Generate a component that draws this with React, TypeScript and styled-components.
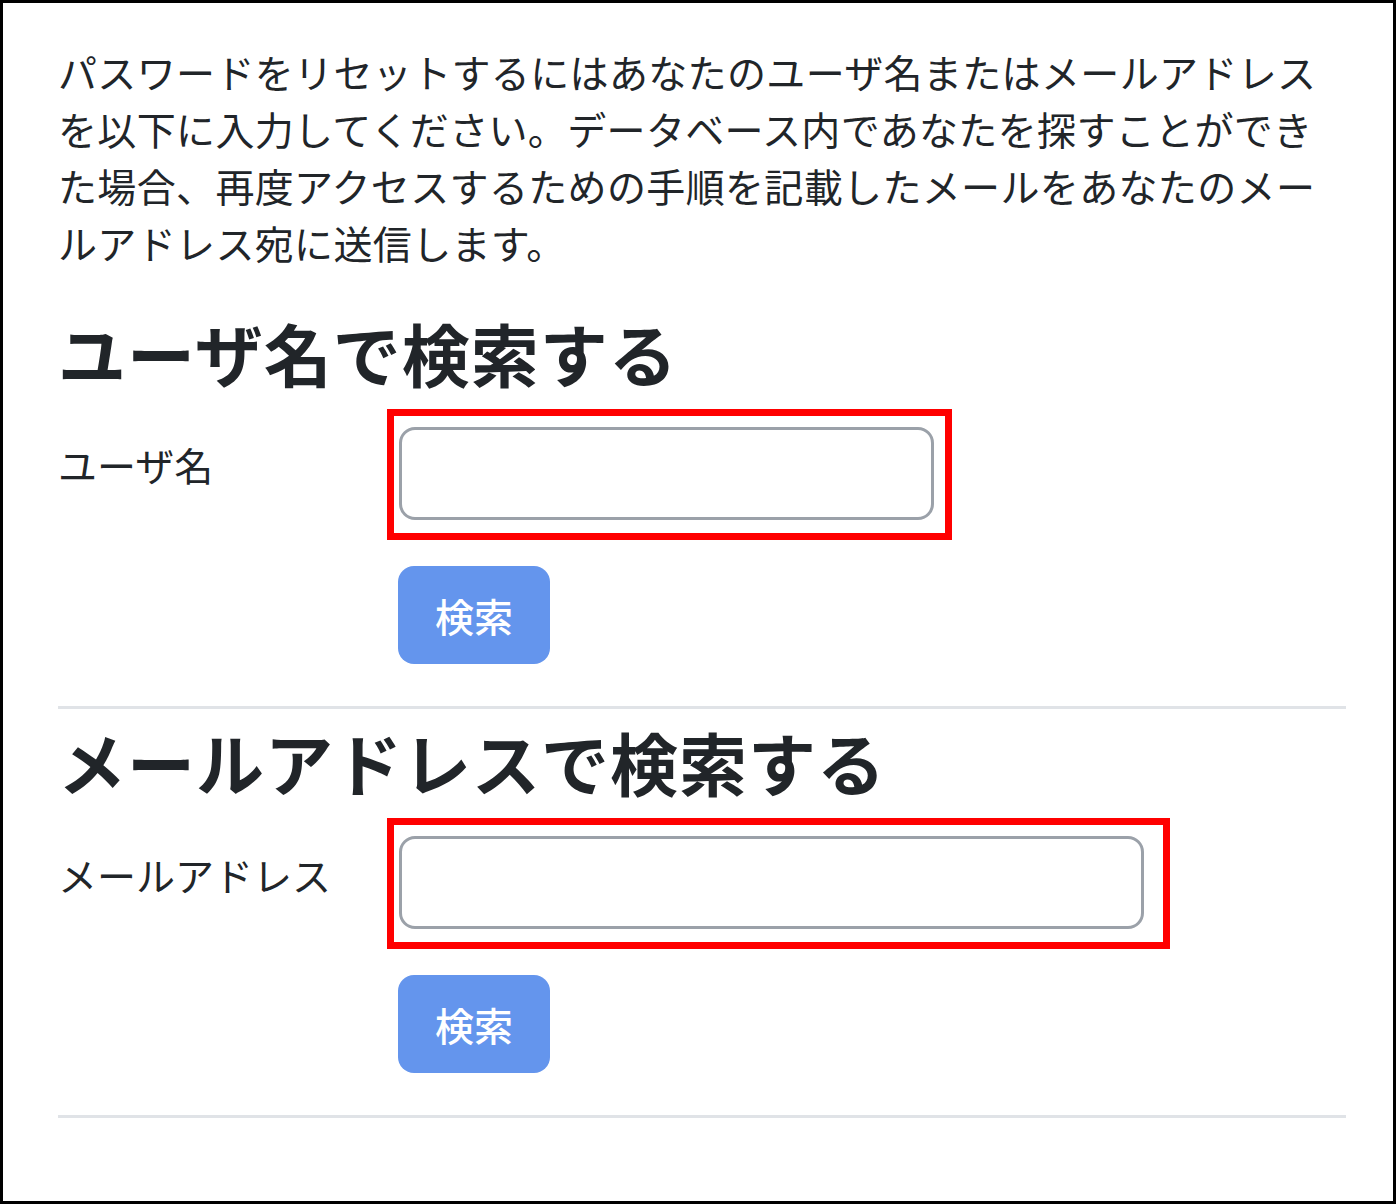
import React from 'react';
import styled, { createGlobalStyle } from 'styled-components';

const GlobalStyle = createGlobalStyle`
  html, body {
    margin: 0;
    padding: 0;
    background: #ffffff;
  }
  body {
    font-family: "Noto Sans CJK JP", "Noto Sans", sans-serif;
    color: #212529;
  }
`;

const Frame = styled.div`
  box-sizing: border-box;
  width: 1396px;
  height: 1204px;
  border: 3px solid #000;
  padding: 40px 47px 0 55px;
  background: #fff;
`;

const Intro = styled.p`
  margin: 0;
  font-size: 39px;
  line-height: 57px;
  color: #212529;
  letter-spacing: 0.35px;
`;

const Heading = styled.h3<{ gap: number }>`
  margin: ${p => p.gap}px 0 15px;
  font-size: 68px;
  line-height: 82px;
  font-weight: 700;
  letter-spacing: 1px;
  color: #212529;
`;

const FormRow = styled.div`
  display: flex;
  align-items: flex-start;
`;

const Label = styled.label<{ offset: number }>`
  width: 329px;
  flex-shrink: 0;
  margin-top: ${p => p.offset}px;
  font-size: 39px;
  line-height: 57px;
  color: #212529;
`;

const Highlight = styled.div<{ padRight: number }>`
  border: 7px solid #ff0000;
  padding: 11px ${p => p.padRight}px 13px 5px;
`;

const TextInput = styled.input<{ w: number }>`
  box-sizing: border-box;
  display: block;
  width: ${p => p.w}px;
  height: 93px;
  border: 3px solid #9ba1a9;
  border-radius: 16px;
  background: #fff;
  outline: none;
  font-size: 39px;
  padding: 0 18px;
`;

const ButtonRow = styled.div`
  padding-left: 340px;
  margin-top: 26px;
`;

const SearchButton = styled.button`
  box-sizing: border-box;
  width: 152px;
  height: 98px;
  border: none;
  border-radius: 16px;
  background: #6495ed;
  color: #fff;
  font-family: "Noto Sans CJK JP", sans-serif;
  font-size: 39px;
  font-weight: 500;
  cursor: pointer;
`;

const Divider = styled.hr`
  margin: 42px 0 0;
  border: none;
  height: 3px;
  background: #e0e3e7;
`;

type Section = {
  title: string;
  label: string;
  inputWidth: number;
  padRight: number;
  gap: number;
  labelOffset: number;
};

const sections: Section[] = [
  { title: 'ユーザ名で検索する', label: 'ユーザ名', inputWidth: 535, padRight: 11, gap: 41, labelOffset: 27 },
  { title: 'メールアドレスで検索する', label: 'メールアドレス', inputWidth: 745, padRight: 19, gap: 12, labelOffset: 28 },
];

const App: React.FC = () => (
  <>
    <GlobalStyle />
    <Frame>
      <Intro>
        パスワードをリセットするにはあなたのユーザ名またはメールアドレスを以下に入力してください。データベース内であなたを探すことができた場合、再度アクセスするための手順を記載したメールをあなたのメールアドレス宛に送信します。
      </Intro>
      {sections.map(s => (
        <div key={s.title}>
          <Heading gap={s.gap}>{s.title}</Heading>
          <FormRow>
            <Label offset={s.labelOffset}>{s.label}</Label>
            <Highlight padRight={s.padRight}>
              <TextInput type="text" w={s.inputWidth} />
            </Highlight>
          </FormRow>
          <ButtonRow>
            <SearchButton type="button">検索</SearchButton>
          </ButtonRow>
          <Divider />
        </div>
      ))}
    </Frame>
  </>
);

export default App;
